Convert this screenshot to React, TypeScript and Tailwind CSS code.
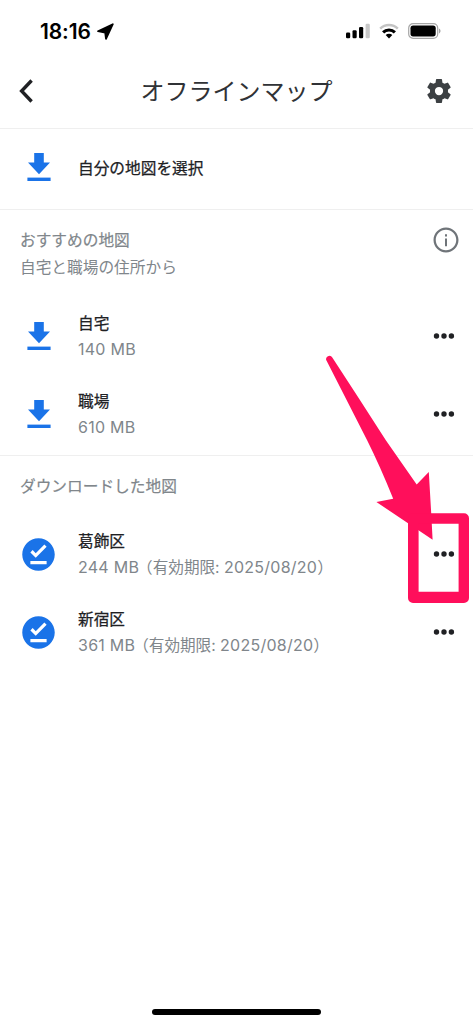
import { ReactNode } from 'react';

interface IOfflineMap {
  id: string;
  name: string;
  size: string;
  expires?: string;
}

const suggestedMaps: IOfflineMap[] = [
  { id: 'home', name: '自宅', size: '140 MB' },
  { id: 'work', name: '職場', size: '610 MB' },
];

const downloadedMaps: IOfflineMap[] = [
  { id: 'katsushika', name: '葛飾区', size: '244 MB', expires: '2025/08/20' },
  { id: 'shinjuku', name: '新宿区', size: '361 MB', expires: '2025/08/20' },
];

function DownloadSVG() {
  return (
    <svg viewBox="0 0 24 28" className="h-7 w-6 fill-[#1a73e8]">
      <path d="M7.2 0h9.6v9.4H23L12 21.2 1 9.4h6.2z" />
      <path d="M.4 24.6h23.2V28H.4z" />
    </svg>
  );
}

function OfflinePinSVG() {
  return (
    <svg viewBox="0 0 24 24" className="mr-px mt-0.5 size-[39px] fill-[#1a73e8]">
      <path d="M12 2C6.5 2 2 6.5 2 12s4.5 10 10 10 10-4.5 10-10S17.5 2 12 2zm5 16H7v-2h10v2zm-6.7-4L7 10.7l1.4-1.4 1.9 1.9 5.3-5.3L17 7.3 10.3 14z" />
    </svg>
  );
}

function StatusBar() {
  return (
    <div className="flex h-[62px] items-center justify-between pl-10 pr-8">
      <div className="flex items-center gap-1.5 pt-px">
        <span className="text-[21px] font-semibold leading-none tracking-[-0.1px] text-black">
          18:16
        </span>
        <svg viewBox="0 0 17 17" className="size-[17px] fill-black stroke-black">
          <path d="M1 8.2 15.8 1.2 9 15.8 8.2 9.6z" strokeWidth="1.8" strokeLinejoin="round" />
        </svg>
      </div>
      <div className="flex items-center gap-[9px]">
        <svg viewBox="0 0 24 16" className="h-4 w-6">
          <rect x="0" y="9.6" width="4.2" height="5.6" rx="1.2" />
          <rect x="6.5" y="7.2" width="4.2" height="8" rx="1.2" />
          <rect x="13" y="4" width="4.2" height="11.2" rx="1.2" />
          <rect x="19.6" y=".8" width="4.2" height="14.4" rx="1.2" fill="#c8c8c8" />
        </svg>
        <svg viewBox="0 0 20 16" className="h-4 w-5 fill-none">
          <path d="M1.2 5.6a12.7 12.7 0 0 1 17.6 0" stroke="#c4c4c4" strokeWidth="2.5" />
          <path d="M4.1 9.4a8.2 8.2 0 0 1 11.8 0" stroke="#000" strokeWidth="3" />
          <path d="M6.7 12.1a4.6 4.6 0 0 1 6.6 0L10 15.6z" fill="#000" />
        </svg>
        <svg viewBox="0 0 33 16" className="h-4 w-[33px]">
          <rect x=".7" y=".7" width="29" height="14.6" rx="4.4" fill="#fff" stroke="#a6a6a6" strokeWidth="1.2" />
          <rect x="2.5" y="2.6" width="25.2" height="10.8" rx="2.6" />
          <path d="M31 5.6c2 .8 2 4 0 4.8z" fill="#a6a6a6" />
        </svg>
      </div>
    </div>
  );
}

function Header() {
  return (
    <header className="flex h-[67px] items-center justify-between border-b border-[#efefef] pb-2 pl-[19px] pr-[19px]">
      <button>
        <svg viewBox="0 0 14 24" className="h-6 w-[14px] fill-none stroke-[#202124]">
          <path d="M12.6 1.5 2.6 12l10 10.5" strokeWidth="3.4" />
        </svg>
      </button>
      <h1 className="ml-4 pt-0.5 text-[24px] leading-8 text-[#303236]">
        オフラインマップ
      </h1>
      <button>
        <svg viewBox="0 0 24 24" className="size-[30px] fill-[#3c4043]">
          <path d="M19.14 12.94c.04-.3.06-.61.06-.94 0-.32-.02-.64-.07-.94l2.03-1.58a.49.49 0 0 0 .12-.61l-1.92-3.32a.488.488 0 0 0-.59-.22l-2.39.96c-.5-.38-1.03-.7-1.62-.94l-.36-2.54a.484.484 0 0 0-.48-.41h-3.84c-.24 0-.43.17-.47.41l-.36 2.54c-.59.24-1.13.57-1.62.94l-2.39-.96c-.22-.08-.47 0-.59.22L2.74 8.87c-.12.21-.08.47.12.61l2.03 1.58c-.05.3-.09.63-.09.94s.02.64.07.94l-2.03 1.58a.49.49 0 0 0-.12.61l1.92 3.32c.12.22.37.29.59.22l2.39-.96c.5.38 1.03.7 1.62.94l.36 2.54c.05.24.24.41.48.41h3.84c.24 0 .44-.17.47-.41l.36-2.54c.59-.24 1.13-.56 1.62-.94l2.39.96c.22.08.47 0 .59-.22l1.92-3.32c.12-.22.07-.47-.12-.61l-2.01-1.58zM12 15.3a3.3 3.3 0 1 1 0-6.6 3.3 3.3 0 0 1 0 6.6z" />
        </svg>
      </button>
    </header>
  );
}

function MapRow({ data, icon }: { data: IOfflineMap; icon: ReactNode }) {
  return (
    <li className="flex h-[77.7px] items-center pr-[18px]">
      <div className="flex w-[78px] justify-center">{icon}</div>
      <div className="flex flex-1 flex-col whitespace-nowrap">
        <h3 className="pt-0.5 text-[15.7px] leading-[25px] text-[#202124] [-webkit-text-stroke:0.25px_#202124]">
          {data.name}
        </h3>
        <p className="text-[16px] leading-[26px] tracking-[0.25px] text-[#80868b]">
          {data.size}
          {data.expires && (
            <>
              <span className="-ml-[2px] text-[15.6px] tracking-normal">
                （有効期限:{' '}
              </span>
              {data.expires}）
            </>
          )}
        </p>
      </div>
      <button>
        <svg viewBox="0 0 22 6" className="h-1.5 w-[22px] fill-[#202124]">
          <circle cx="3.5" cy="3" r="2.7" />
          <circle cx="11" cy="3" r="2.7" />
          <circle cx="18.4" cy="3" r="2.7" />
        </svg>
      </button>
    </li>
  );
}

// Arrow and frame pointing at the menu of the first downloaded map
function Highlight() {
  return (
    <svg
      viewBox="0 0 473 1024"
      className="pointer-events-none absolute left-0 top-0 h-[1024px] w-[473px] fill-[#ff0f5b]">
      <path d="M332.3 357.6Q360 400 386 440.5l30.7 44L428.8 472l2.4 41 1.4 26.7L376.4 502l16.8-3.2Q380 466 367 440L326.6 360.8a3.2 3.2 0 0 1 5.7-3.2z" />
      <path
        fillRule="evenodd"
        d="M413 513.3h51a5 5 0 0 1 5 5V598a5 5 0 0 1-5 5h-51a5 5 0 0 1-5-5v-79.7a5 5 0 0 1 5-5zm5.6 10.5v68h40v-68z"
      />
    </svg>
  );
}

export default function App() {
  return (
    <div className="relative flex h-[1024px] w-[473px] flex-col overflow-hidden bg-white font-['Inter','Noto_Sans_CJK_JP',sans-serif]">
      <StatusBar />
      <Header />

      <div className="flex h-[81px] items-center border-b border-[#efefef]">
        <div className="flex w-[78px] justify-center pb-1">
          <DownloadSVG />
        </div>
        <span className="text-[15.7px] text-[#202124] [-webkit-text-stroke:0.25px_#202124]">
          自分の地図を選択
        </span>
      </div>

      <section className="h-[246px] border-b border-[#efefef]">
        <div className="flex h-[87px] items-start justify-between pl-5 pr-3 pt-[17px]">
          <div className="text-[15.7px] leading-[27px] text-[#80868b]">
            <h2 className="[-webkit-text-stroke:0.2px_#80868b]">おすすめの地図</h2>
            <p>自宅と職場の住所から</p>
          </div>
          <svg viewBox="0 0 24 24" className="-mt-0.5 size-[30px] fill-[#6f7479]">
            <path d="M11.2 10.8h1.6V17h-1.6zm0-3.5h1.6v1.9h-1.6zM12 2C6.48 2 2 6.48 2 12s4.48 10 10 10 10-4.48 10-10S17.52 2 12 2zm0 18.2c-4.53 0-8.2-3.67-8.2-8.2S7.47 3.8 12 3.8s8.2 3.67 8.2 8.2-3.67 8.2-8.2 8.2z" />
          </svg>
        </div>
        <ul>
          {suggestedMaps.map((map) => (
            <MapRow key={map.id} data={map} icon={<DownloadSVG />} />
          ))}
        </ul>
      </section>

      <section className="flex-1">
        <h2 className="h-[59px] pl-5 pt-[17px] text-[15.7px] leading-[27px] text-[#80868b] [-webkit-text-stroke:0.2px_#80868b]">
          ダウンロードした地図
        </h2>
        <ul>
          {downloadedMaps.map((map) => (
            <MapRow key={map.id} data={map} icon={<OfflinePinSVG />} />
          ))}
        </ul>
      </section>

      <div className="mb-[9px] ml-[152px] h-1.5 w-[169px] rounded-full bg-black" />
      <Highlight />
    </div>
  );
}
